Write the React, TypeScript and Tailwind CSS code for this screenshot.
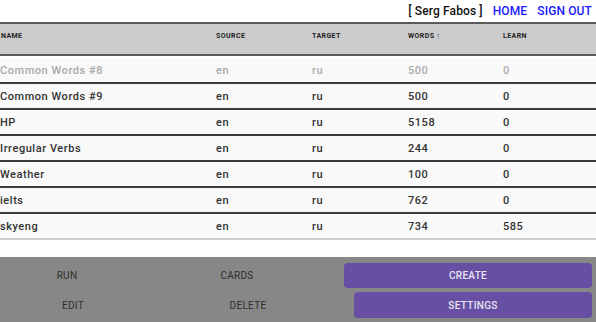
import React from "react";

type Row = {
  name: string;
  source: string;
  target: string;
  words: number;
  learn: number;
  muted?: boolean;
};

const rows: Row[] = [
  { name: "Common Words #8", source: "en", target: "ru", words: 500, learn: 0, muted: true },
  { name: "Common Words #9", source: "en", target: "ru", words: 500, learn: 0 },
  { name: "HP", source: "en", target: "ru", words: 5158, learn: 0 },
  { name: "Irregular Verbs", source: "en", target: "ru", words: 244, learn: 0 },
  { name: "Weather", source: "en", target: "ru", words: 100, learn: 0 },
  { name: "ielts", source: "en", target: "ru", words: 762, learn: 0 },
  { name: "skyeng", source: "en", target: "ru", words: 734, learn: 585 },
];

const font = { fontFamily: "Roboto, 'Liberation Sans', sans-serif" };

const App = () => {
  return (
    <div className="flex h-[322px] w-[596px] flex-col overflow-hidden bg-white" style={font}>
      <header className="flex h-[22px] items-center justify-end gap-[10px] pr-[4px] text-[12px] font-medium tracking-[0.01em]">
        <span className="text-[#111]">[&nbsp;Serg Fabos&nbsp;]</span>
        <a className="text-[#1a1aff]">HOME</a>
        <a className="text-[#1a1aff]">SIGN OUT</a>
      </header>

      <div className="grid h-[34px] grid-cols-[216px_96px_96px_95px_1fr] items-center border-y-2 border-[#5a5a5a] bg-[#cbcbcb] pb-[6px] text-[7px] font-bold tracking-[0.06em] text-[#222]">
        <span className="pl-[1px]">NAME</span>
        <span>SOURCE</span>
        <span>TARGET</span>
        <span>WORDS ↑</span>
        <span>LEARN</span>
      </div>

      <div className="mt-[2px] bg-[#f9f9f9]">
        {rows.map((row, i) => (
          <div
            key={row.name}
            className={`grid h-[26px] grid-cols-[216px_96px_96px_95px_1fr] items-center pt-[2px] text-[11px] font-medium tracking-[0.05em] ${
              row.muted ? "text-[#a9a9a9]" : "text-[#333]"
            } ${i < rows.length - 1 ? "border-b-2 border-[#3c3c3c]" : "border-b-2 border-[#cfcfcf]"}`}
          >
            <span>{row.name}</span>
            <span>{row.source}</span>
            <span>{row.target}</span>
            <span>{row.words}</span>
            <span>{row.learn}</span>
          </div>
        ))}
      </div>

      <footer className="mt-auto flex h-[65px] flex-col gap-[4px] bg-[#878787] pt-[6px] text-[10px] tracking-[0.03em] text-[#2e2e2e]">
        <div className="flex h-[25px] items-center">
          <button className="w-[134px]">RUN</button>
          <button className="w-[206px]">CARDS</button>
          <button className="ml-[4px] h-full w-[248px] rounded-[4px] bg-[#6750a4] font-medium text-[#e8e4f2]">CREATE</button>
        </div>
        <div className="flex h-[26px] items-center">
          <button className="w-[146px]">EDIT</button>
          <button className="w-[204px]">DELETE</button>
          <button className="ml-[4px] h-full w-[238px] rounded-[4px] bg-[#6750a4] font-medium text-[#e8e4f2]">SETTINGS</button>
        </div>
      </footer>
    </div>
  );
};

export default App;
